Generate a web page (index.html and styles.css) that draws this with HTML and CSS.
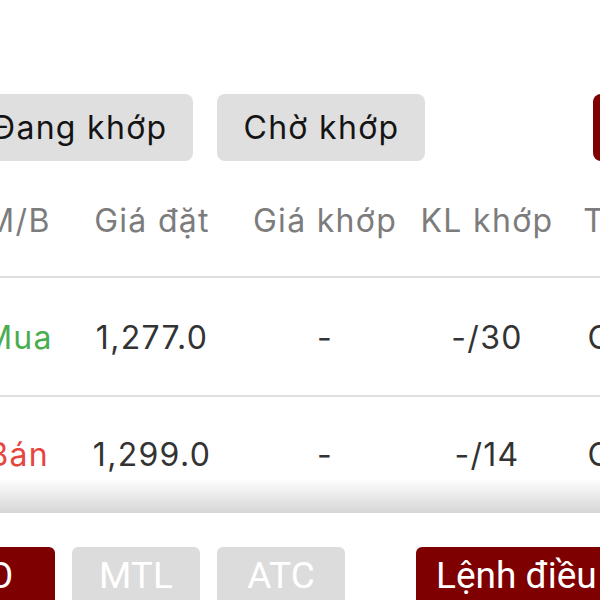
FILE: index.html
```html
<!doctype html>
<html>
<head>
	<meta charset="utf-8">
	<title>Sổ lệnh</title>
	<link rel="stylesheet" href="styles.css">
</head>
<body>
	<div id="screen">
		<div class="tabs">
			<a class="tab" href="javascript:;">Đang khớp</a>
			<a class="tab" href="javascript:;">Chờ khớp</a>
			<a class="tab on" href="javascript:;">Đã khớp</a>
		</div>

		<div class="orders">
			<div class="row head">
				<span>M/B</span>
				<span>Giá đặt</span>
				<span>Giá khớp</span>
				<span>KL khớp</span>
				<span>Trạng thái</span>
			</div>
			<div class="row">
				<span class="buy">Mua</span>
				<span>1,277.0</span>
				<span>-</span>
				<span>-/30</span>
				<span>Chờ khớp</span>
			</div>
			<div class="row last">
				<span class="sell">Bán</span>
				<span>1,299.0</span>
				<span>-</span>
				<span>-/14</span>
				<span>Chờ khớp</span>
			</div>
			<div class="shade"></div>
		</div>

		<div class="types">
			<a class="type on" href="javascript:;">LO</a>
			<a class="type" href="javascript:;">MTL</a>
			<a class="type" href="javascript:;">ATC</a>
			<a class="type on cond" href="javascript:;">Lệnh điều kiện</a>
		</div>
	</div>
</body>
</html>
```

FILE: styles.css
```css
*{margin: 0; padding: 0; box-sizing: border-box; text-decoration: none;}
html, body{ width: 600px; height: 600px; overflow: hidden; background: #fff;}
body{ font-family: Inter, "Noto Sans", "DejaVu Sans", sans-serif;}

#screen {width: 600px; overflow: hidden;}

/* tabs trên cùng */
.tabs {display: flex; gap: 24px; margin: 94px 0 0 -34px; white-space: nowrap;}
.tab {flex-shrink: 0; height: 67px; line-height: 67px; padding: 0 26px; border-radius: 8px; background: #dfdfdf; color: #141414; font-size: 32px; letter-spacing: 1.3px;}
.tab.on {margin-left: 144px; background: #7e0000; color: #fff;}

/* bảng lệnh */
.orders {margin-left: -34px;}
.row {display: grid; grid-template-columns: 104px 164px 182px 142px 215px; padding: 40px 0 37px; border-bottom: 2px solid #dedede; font-size: 32px; letter-spacing: 1.3px; line-height: 40px; color: #333; white-space: nowrap;}
.row span {text-align: center;}
.row.head {padding: 40px 0 35px; color: #7c7c7c;}
.row.last {padding: 38px 0 5px; border-bottom: none;}
.buy {color: #4cad50;}
.sell {color: #e5463f;}
.shade {height: 33px; background: linear-gradient(#fdfdfd, #d6d6d6);}

/* loại lệnh */
.types {display: flex; gap: 17px; margin: 34px 0 0 -73px; font-family: Roboto, "Liberation Sans", sans-serif; white-space: nowrap;}
.type {flex-shrink: 0; width: 128px; height: 58px; line-height: 58px; border-radius: 6px; background: #dcdcdc; color: #fff; font-size: 37px; text-align: center;}
.type.on {background: #7e0000;}
.type.cond {width: auto; padding: 0 20px; margin-left: 54px;}
```
